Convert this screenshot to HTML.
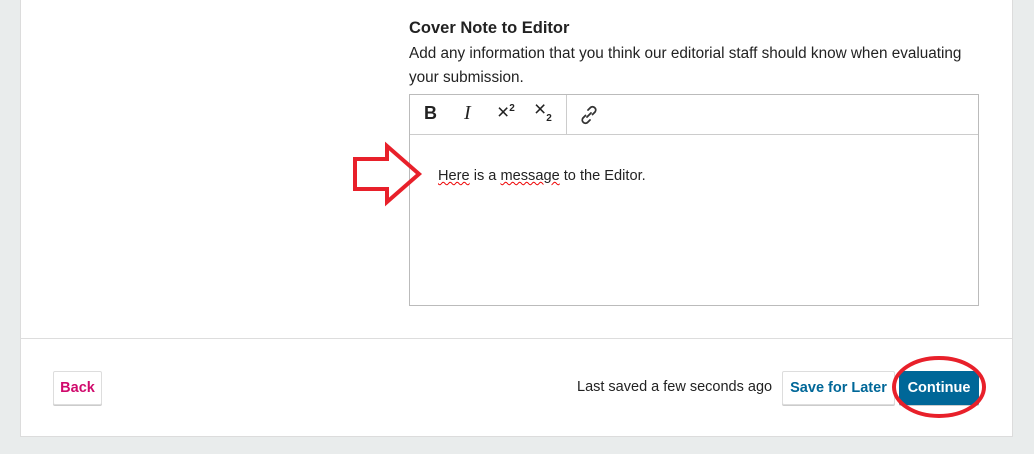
<!DOCTYPE html>
<html><head><style>
body{margin:0;width:1034px;height:454px;background:#e9ecec;font-family:"Liberation Sans","DejaVu Sans",sans-serif;position:relative;overflow:hidden;color:#222}
.card{position:absolute;left:20px;top:-2px;width:991px;height:438px;background:#fff;border:1px solid #dcdcdc;border-top:none}
.sep{position:absolute;left:20px;top:338px;width:992px;height:1px;background:#ddd}
.t{position:absolute;left:409px;top:19px;font-weight:bold;font-size:16.5px}
.d{position:absolute;left:409px;top:42px;font-size:15.3px;line-height:24px;width:570px}
.ed{position:absolute;left:409px;top:94px;width:568px;height:210px;border:1px solid #bbb}
.tb{height:39px;border-bottom:1px solid #ccc;position:relative}
.tb span{position:absolute;top:8px;font-size:18px}
.vs{position:absolute;left:156px;top:0;width:1px;height:39px;background:#ccc}
.msg{position:absolute;left:28px;top:73px;font-size:14.6px}
.sq{text-decoration:underline wavy #e00;text-decoration-thickness:1px}
.btn{position:absolute;top:371px;height:32px;border:1px solid #ddd;box-shadow:0 1px 0 #ccc;font-weight:bold;font-size:14.5px;line-height:32px;text-align:center;background:#fff;border-radius:2px}
</style></head><body>
<div class="card"></div>
<div class="sep"></div>
<div class="t">Cover Note to Editor</div>
<div class="d">Add any information that you think our editorial staff should know when evaluating your submission.</div>
<div class="ed">
 <div class="tb">
  <span style="left:14px;font-weight:bold">B</span>
  <span style="left:54px;font-family:'Liberation Serif',serif;font-style:italic;font-size:20px;top:7px">I</span>
  <span style="left:87px;font-size:21px;top:6px">×<sup style="font-size:10px;font-weight:bold">2</sup></span>
  <span style="left:124px;font-size:21px;top:3px">×<sub style="font-size:10px;font-weight:bold">2</sub></span>
  <div class="vs"></div>
  <svg style="position:absolute;left:168px;top:9px" width="22" height="22" viewBox="0 0 22 22" fill="none" stroke="#333" stroke-width="1.8" stroke-linecap="round"><path d="M9 13l4-4M10 6l2.5-2.5a3.2 3.2 0 0 1 4.5 4.5L14.5 10.5M12 16l-2.5 2.5a3.2 3.2 0 0 1-4.5-4.5L7.5 11.5"/></svg>
 </div>
 <div class="msg"><span class="sq">Here</span> is a <span class="sq">message</span> to the Editor.</div>
</div>
<svg style="position:absolute;left:0;top:0" width="440" height="220"><path d="M355 159H387V146L419 174L387 202V189H355Z" fill="none" stroke="#e8202a" stroke-width="4"/></svg>
<div class="btn" style="left:53px;width:47px;color:#d00a6c">Back</div>
<div style="position:absolute;left:577px;top:379px;font-size:14.5px">Last saved a few seconds ago</div>
<div class="btn" style="left:782px;width:111px;color:#006798">Save for Later</div>
<div class="btn" style="left:899px;width:78px;background:#006798;color:#fff;border-color:#006798">Continue</div>
<svg style="position:absolute;left:890px;top:353px" width="100" height="68"><ellipse cx="49" cy="34" rx="45" ry="29" fill="none" stroke="#e8202a" stroke-width="4"/></svg>
</body></html>
